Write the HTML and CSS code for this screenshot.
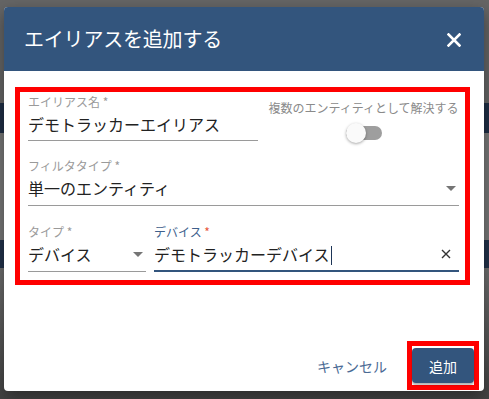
FILE: index.html
```html
<!DOCTYPE html>
<html lang="ja">
<head>
  <meta charset="UTF-8" />
  <meta name="viewport" content="width=device-width, initial-scale=1.0"/>
  <title>エイリアスを追加する</title>
  <link rel="stylesheet" href="styles.css">
</head>
<body>
  <div class="dialog">
    <div class="dialog-header">
      <h2>エイリアスを追加する</h2>
      <svg class="close" width="14" height="14" viewBox="0 0 14 14">
        <path d="M1.5 1.5 L12.5 12.5 M12.5 1.5 L1.5 12.5" stroke="#fff" stroke-width="2.6" stroke-linecap="square"/>
      </svg>
    </div>

    <div class="dialog-body">
      <div class="form-box">
        <div class="row">
          <div class="field field-name">
            <div class="label">エイリアス名 *</div>
            <div class="input">デモトラッカーエイリアス</div>
          </div>
          <div class="toggle-field">
            <div class="toggle-label">複数のエンティティとして解決する</div>
            <div class="toggle">
              <span class="track"></span>
              <span class="thumb"></span>
            </div>
          </div>
        </div>

        <div class="field field-filter">
          <div class="label">フィルタタイプ *</div>
          <div class="input select">
            <span>単一のエンティティ</span>
            <span class="arrow"></span>
          </div>
        </div>

        <div class="row row-last">
          <div class="field field-type">
            <div class="label">タイプ *</div>
            <div class="input select">
              <span>デバイス</span>
              <span class="arrow"></span>
            </div>
          </div>
          <div class="field field-device">
            <div class="label label-focus">デバイス <span class="req">*</span></div>
            <div class="input input-focus">
              <span>デモトラッカーデバイス<span class="caret"></span></span>
              <svg class="clear" width="10" height="10" viewBox="0 0 10 10">
                <path d="M1 1 L9 9 M9 1 L1 9" stroke="#333" stroke-width="1.4"/>
              </svg>
            </div>
          </div>
        </div>
      </div>
    </div>

    <div class="dialog-actions">
      <button class="btn-cancel">キャンセル</button>
      <div class="add-box">
        <button class="btn-add">追加</button>
      </div>
    </div>
  </div>
</body>
</html>
```

FILE: styles.css
```css
* {
  margin: 0;
  padding: 0;
  box-sizing: border-box;
}

body {
  width: 489px;
  height: 399px;
  overflow: hidden;
  font-family: 'Noto Sans CJK JP', 'Noto Sans', sans-serif;
  background: linear-gradient(to bottom,
    #656565 0, #656565 103px,
    #1f2e45 103px, #1f2e45 133px,
    #777777 133px, #777777 240px,
    #22324a 240px, #22324a 268px,
    #6f6f6f 268px, #5a5a5a 330px, #444444 399px);
  padding: 7px 5px 0 4px;
}

.dialog {
  width: 480px;
  background-color: #ffffff;
  border-radius: 4px;
  overflow: hidden;
  box-shadow: 0 6px 16px rgba(0, 0, 0, 0.4);
}

.dialog-header {
  height: 64px;
  background-color: #33557d;
  color: #ffffff;
  display: flex;
  align-items: center;
  justify-content: space-between;
  padding: 0 23px 0 20px;
}

.dialog-header h2 {
  font-size: 20px;
  font-weight: 400;
  line-height: 24px;
  letter-spacing: -0.2px;
}

.close {
  display: block;
  margin-top: 1px;
}

.dialog-body {
  padding: 16px 14px 0 11px;
}

.form-box {
  border: 5px solid #ff0000;
  padding: 2px 6px 8px 8px;
}

.row {
  display: flex;
  gap: 10px;
}

.field {
  display: flex;
  flex-direction: column;
}

.label {
  font-size: 12px;
  line-height: 16px;
  color: #9a9a9a;
}

.input {
  margin-top: 2px;
  font-size: 16px;
  line-height: 24px;
  color: #222222;
  padding-bottom: 4px;
  border-bottom: 1px solid #9a9a9a;
  display: flex;
  align-items: center;
  justify-content: space-between;
}

.field-name {
  width: 230px;
}

.toggle-field {
  flex: 1;
  display: flex;
  flex-direction: column;
  align-items: center;
  padding-top: 6px;
}

.toggle-label {
  font-size: 12px;
  line-height: 16px;
  color: #8a8a8a;
  white-space: nowrap;
}

.toggle {
  position: relative;
  width: 36px;
  height: 20px;
  margin-top: 7px;
}

.toggle .track {
  position: absolute;
  left: 0;
  top: 3px;
  width: 36px;
  height: 14px;
  border-radius: 7px;
  background-color: #9e9e9e;
}

.toggle .thumb {
  position: absolute;
  left: 0;
  top: 0;
  width: 20px;
  height: 20px;
  border-radius: 50%;
  background-color: #fafafa;
  box-shadow: 0 1px 3px rgba(0, 0, 0, 0.35);
}

.field-filter {
  margin-top: 15px;
}

.field-filter .input {
  padding-bottom: 5px;
}

.arrow {
  width: 0;
  height: 0;
  border-left: 5px solid transparent;
  border-right: 5px solid transparent;
  border-top: 5px solid #757575;
  margin-right: 3px;
}

.row-last {
  margin-top: 18px;
  gap: 8px;
}

.field-type {
  width: 118px;
}

.field-type .input {
  padding-bottom: 5px;
}

.field-device {
  flex: 1;
}

.label-focus {
  color: #3e5f8c;
}

.req {
  color: #e8573a;
}

.input-focus {
  border-bottom: 2px solid #33557d;
  padding-bottom: 4px;
}

.caret {
  display: inline-block;
  width: 1px;
  height: 19px;
  background-color: #1d3557;
  vertical-align: -4px;
  margin-left: 1px;
}

.clear {
  display: block;
  margin-right: 8px;
}

.dialog-actions {
  display: flex;
  justify-content: flex-end;
  align-items: center;
  padding: 56px 5px 1px 0;
}

.btn-cancel {
  background: transparent;
  border: none;
  font-family: inherit;
  font-size: 14px;
  line-height: 20px;
  color: #4a6a94;
  padding: 0 8px;
  margin-right: 12px;
  cursor: pointer;
}

.add-box {
  border: 5px solid #ff0000;
  padding: 2px 0;
}

.btn-add {
  display: block;
  width: 62px;
  height: 35px;
  background-color: #33557d;
  color: #ffffff;
  border: none;
  border-radius: 4px;
  font-family: inherit;
  font-size: 14px;
  box-shadow: 0 2px 2px rgba(0, 0, 0, 0.3);
  cursor: pointer;
}
```
